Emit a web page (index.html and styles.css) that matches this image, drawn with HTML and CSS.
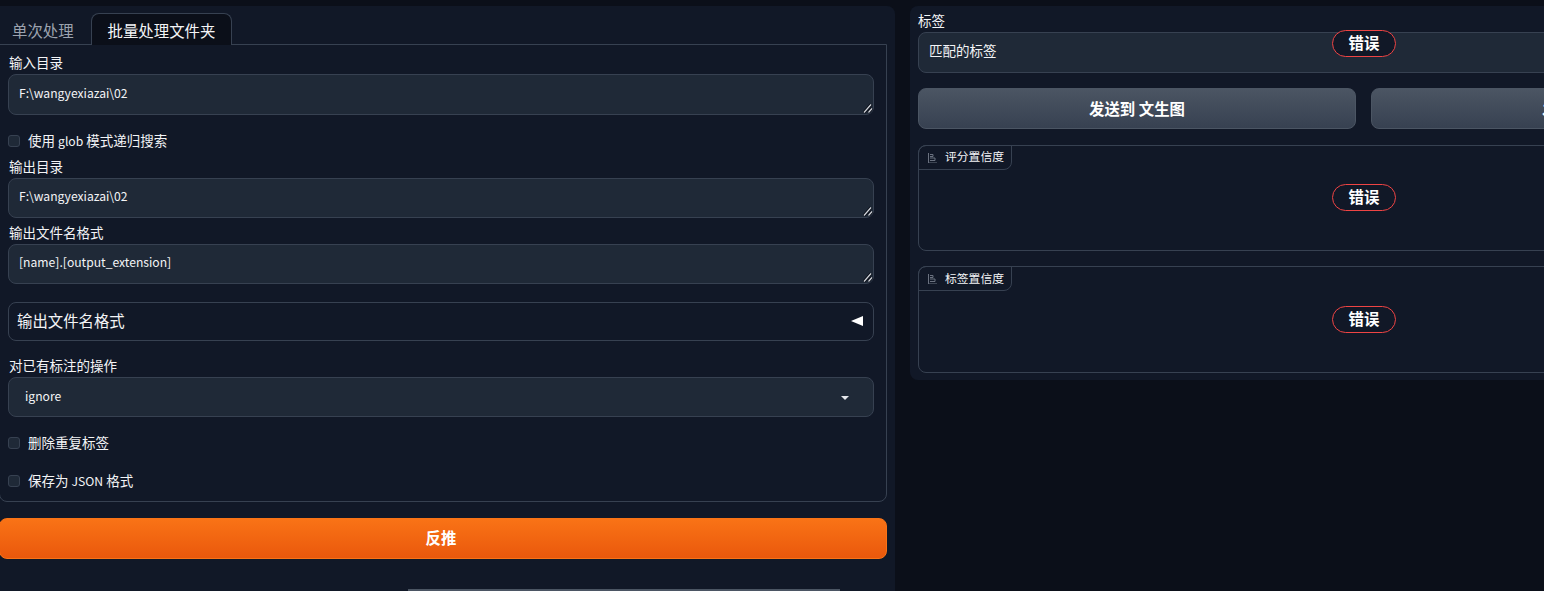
FILE: index.html
```html
<!DOCTYPE html>
<html lang="zh">
<head>
<meta charset="utf-8">
<title>反推</title>
<link rel="stylesheet" href="styles.css">
</head>
<body>
<div class="page">
  <section class="left">
    <div class="tabs">
      <button class="tab">单次处理</button>
      <button class="tab tab-active">批量处理文件夹</button>
    </div>
    <div class="tab-body">
      <label class="field">
        <span class="label">输入目录</span>
        <span class="input-wrap">
          <textarea class="input h41" spellcheck="false">F:\wangyexiazai\02</textarea>
          <svg class="grip" viewBox="0 0 10 10" aria-hidden="true"><path class="grip-d" d="M1 9 8 1M5.5 9 9 5"/><path class="grip-l" d="M1 9 8 1M5.5 9 9 5"/></svg>
        </span>
      </label>
      <label class="check check-first"><input type="checkbox"><span class="check-text">使用 <span class="latin">glob</span> 模式递归搜索</span></label>
      <label class="field field-tight">
        <span class="label">输出目录</span>
        <span class="input-wrap">
          <textarea class="input h40" spellcheck="false">F:\wangyexiazai\02</textarea>
          <svg class="grip" viewBox="0 0 10 10" aria-hidden="true"><path class="grip-d" d="M1 9 8 1M5.5 9 9 5"/><path class="grip-l" d="M1 9 8 1M5.5 9 9 5"/></svg>
        </span>
      </label>
      <label class="field field-tight2">
        <span class="label">输出文件名格式</span>
        <span class="input-wrap">
          <textarea class="input h40" spellcheck="false">[name].[output_extension]</textarea>
          <svg class="grip" viewBox="0 0 10 10" aria-hidden="true"><path class="grip-d" d="M1 9 8 1M5.5 9 9 5"/><path class="grip-l" d="M1 9 8 1M5.5 9 9 5"/></svg>
        </span>
      </label>
      <div class="accordion">
        <span class="accordion-text">输出文件名格式</span>
        <span class="tri-left"></span>
      </div>
      <div class="field field-select">
        <span class="label">对已有标注的操作</span>
        <div class="select"><span class="select-text">ignore</span><span class="tri-down"></span></div>
      </div>
      <label class="check check-a"><input type="checkbox"><span class="check-text">删除重复标签</span></label>
      <label class="check check-b"><input type="checkbox"><span class="check-text">保存为 <span class="latin">JSON</span> 格式</span></label>
    </div>
    <button class="primary">反推</button>
    <div class="scrollbar"></div>
  </section>

  <section class="right">
    <div class="tags">
      <span class="label">标签</span>
      <div class="tags-box">匹配的标签</div>
      <span class="err">错误</span>
    </div>
    <div class="actions">
      <button class="secondary">发送到 文生图</button>
      <button class="secondary">发送到 图生图</button>
    </div>
    <div class="result result-a">
      <div class="result-tag">
        <svg class="chart" viewBox="0 0 10 10" aria-hidden="true"><path d="M1.5 0v10h8.5M3 1.5h3v2H3M3 5h5v2.5H3"/></svg>
        <span class="result-name">评分置信度</span>
      </div>
      <span class="err">错误</span>
    </div>
    <div class="result result-b">
      <div class="result-tag">
        <svg class="chart" viewBox="0 0 10 10" aria-hidden="true"><path d="M1.5 0v10h8.5M3 1.5h3v2H3M3 5h5v2.5H3"/></svg>
        <span class="result-name">标签置信度</span>
      </div>
      <span class="err">错误</span>
    </div>
  </section>
</div>
</body>
</html>
```
FILE: styles.css
```css
* { box-sizing: border-box; }
html, body {
  margin: 0;
  height: 591px;
  overflow: hidden;
  background: #0b0f19;
}
body {
  color: #f3f4f6;
  font-family: "Noto Sans CJK SC", "Noto Sans", sans-serif;
  font-size: 13.5px;
}
.page {
  display: flex;
  align-items: flex-start;
  width: 1818px;
  padding-top: 6px;
}
.latin { font-size: 12.2px; }

/* left column */
.left {
  position: relative;
  flex: none;
  width: 897px;
  height: 590px;
  margin-left: -2px;
  padding: 7px 8px 0 1px;
  background: #111827;
  border-radius: 0 8px 0 0;
}
.tabs {
  display: flex;
  height: 32px;
  padding-left: 2px;
}
.tab {
  height: 32px;
  padding: 0 15px;
  font: 15.4px/28px "Noto Sans CJK SC", sans-serif;
  color: #9ca3af;
  background: none;
  border: 1px solid transparent;
  border-bottom: 0;
  border-radius: 8px 8px 0 0;
}
.tab:first-child { padding: 0 16px 0 10px; }
.tab-active {
  position: relative;
  z-index: 1;
  padding: 0 16px;
  color: #f3f4f6;
  background: #0b0f19;
  border-color: #374151;
}
.tab-body {
  height: 458px;
  margin-top: -1px;
  padding: 8px 12px 0 8px;
  border: 1px solid #374151;
  border-radius: 0 0 8px 8px;
}
.tab-body .label { padding-left: 1px; }
.field { display: block; }
.label {
  display: block;
  height: 21px;
  font-size: 13.5px;
  line-height: 18px;
  color: #f3f4f6;
}
.input-wrap {
  position: relative;
  display: block;
}
.input {
  display: block;
  width: 100%;
  padding: 8px 10px;
  font: 12.15px/19px "Noto Sans CJK SC", sans-serif;
  color: #f3f4f6;
  background: #1f2937;
  border: 1px solid #374151;
  border-radius: 8px;
  outline: 0;
  resize: none;
}
.grip {
  position: absolute;
  right: 1px;
  bottom: 1px;
  width: 10px;
  height: 11px;
  fill: none;
}
.grip-d { stroke: #0b0f19; stroke-width: 3; }
.grip-l { stroke: #d1d5db; stroke-width: 1.2; }
.h41 { height: 41px; }
.h40 { height: 40px; padding-top: 7px; }
.check {
  display: flex;
  align-items: center;
  gap: 8px;
  height: 20px;
  color: #f3f4f6;
  font-size: 13.5px;
  line-height: 18px;
}
.check-text { margin-bottom: 2px; }
.check input {
  appearance: none;
  flex: none;
  width: 12px;
  height: 12px;
  margin: 0;
  background: #1f2937;
  border: 1px solid #374151;
  border-radius: 3px;
}
.check-first { margin-top: 16px; }
.field-tight { margin-top: 6px; }
.field-tight2 { margin-top: 5px; }
.accordion {
  display: flex;
  align-items: center;
  justify-content: space-between;
  height: 39px;
  margin-top: 18px;
  padding: 0 10px 0 8px;
  font-size: 15.4px;
  border: 1px solid #374151;
  border-radius: 8px;
}
.accordion-text {
  line-height: 20px;
  margin-bottom: 3px;
}
.tri-left {
  width: 0;
  height: 0;
  margin-bottom: 2px;
  border-top: 5.5px solid transparent;
  border-bottom: 5.5px solid transparent;
  border-right: 12px solid #fff;
}
.field-select { margin-top: 15px; }
.select {
  display: flex;
  align-items: center;
  justify-content: space-between;
  height: 40px;
  padding: 0 24px 0 16px;
  font-size: 12.15px;
  background: #1f2937;
  border: 1px solid #374151;
  border-radius: 8px;
}
.select-text {
  line-height: 18px;
  margin-bottom: 3px;
}
.tri-down {
  width: 0;
  height: 0;
  margin-top: 2px;
  border-left: 4px solid transparent;
  border-right: 4px solid transparent;
  border-top: 4px solid #e5e7eb;
}
.check-a { margin-top: 16px; }
.check-b { margin-top: 18px; }
.primary {
  display: block;
  width: 100%;
  height: 41px;
  margin-top: 16px;
  padding: 0 4px 2px 0;
  font: 700 15.4px/1 "Noto Sans CJK SC", sans-serif;
  color: #fff;
  background: linear-gradient(to bottom, #f97316, #ea580c);
  border: 1px solid #f97316;
  border-radius: 8px;
}
.scrollbar {
  position: absolute;
  left: 410px;
  top: 583px;
  width: 432px;
  height: 3px;
  background: #4b5563;
}

/* right column */
.right {
  flex: none;
  width: 908px;
  height: 374px;
  margin-left: 15px;
  padding: 5px 8px 0;
  background: #111827;
  border-radius: 8px;
}
.tags { position: relative; }
.tags-box {
  height: 41px;
  padding: 0 10px;
  font-size: 13.5px;
  line-height: 34px;
  background: #1f2937;
  border: 1px solid #374151;
  border-radius: 8px;
}
.tags .err { top: 19px; }
.err {
  position: absolute;
  left: 414px;
  display: block;
  width: 64px;
  height: 27px;
  font-size: 15.4px;
  font-weight: 700;
  line-height: 23px;
  text-align: center;
  color: #fff;
  background: #111827;
  border: 1px solid #ef4444;
  border-radius: 14px;
}
.actions {
  display: flex;
  gap: 15px;
  margin-top: 15px;
  padding-right: 1px;
}
.secondary {
  flex: 1;
  height: 41px;
  padding-bottom: 1px;
  font: 700 15.4px/1 "Noto Sans CJK SC", sans-serif;
  color: #fff;
  background: linear-gradient(to bottom, #4b5563, #374151);
  border: 1px solid #4b5563;
  border-radius: 8px;
}
.result {
  position: relative;
  background: #111827;
  border: 1px solid #374151;
  border-radius: 8px;
}
.result-a { height: 106px; margin-top: 16px; }
.result-b { height: 107px; margin-top: 15px; }
.result .err { top: 38px; left: 413px; }
.result-b .err { top: 39px; }
.result-tag {
  display: flex;
  align-items: center;
  gap: 8px;
  width: 94px;
  height: 25px;
  margin: -1px 0 0 -1px;
  padding-left: 8px;
  font-size: 11.8px;
  border: 1px solid #374151;
  border-radius: 8px 0 8px 0;
}
.result-name {
  line-height: 16px;
  margin-bottom: 3px;
}
.result-b .result-name { margin-bottom: 1px; }
.chart {
  flex: none;
  width: 10px;
  height: 10px;
  fill: none;
  stroke: #6b7280;
  stroke-width: 1;
}
```
